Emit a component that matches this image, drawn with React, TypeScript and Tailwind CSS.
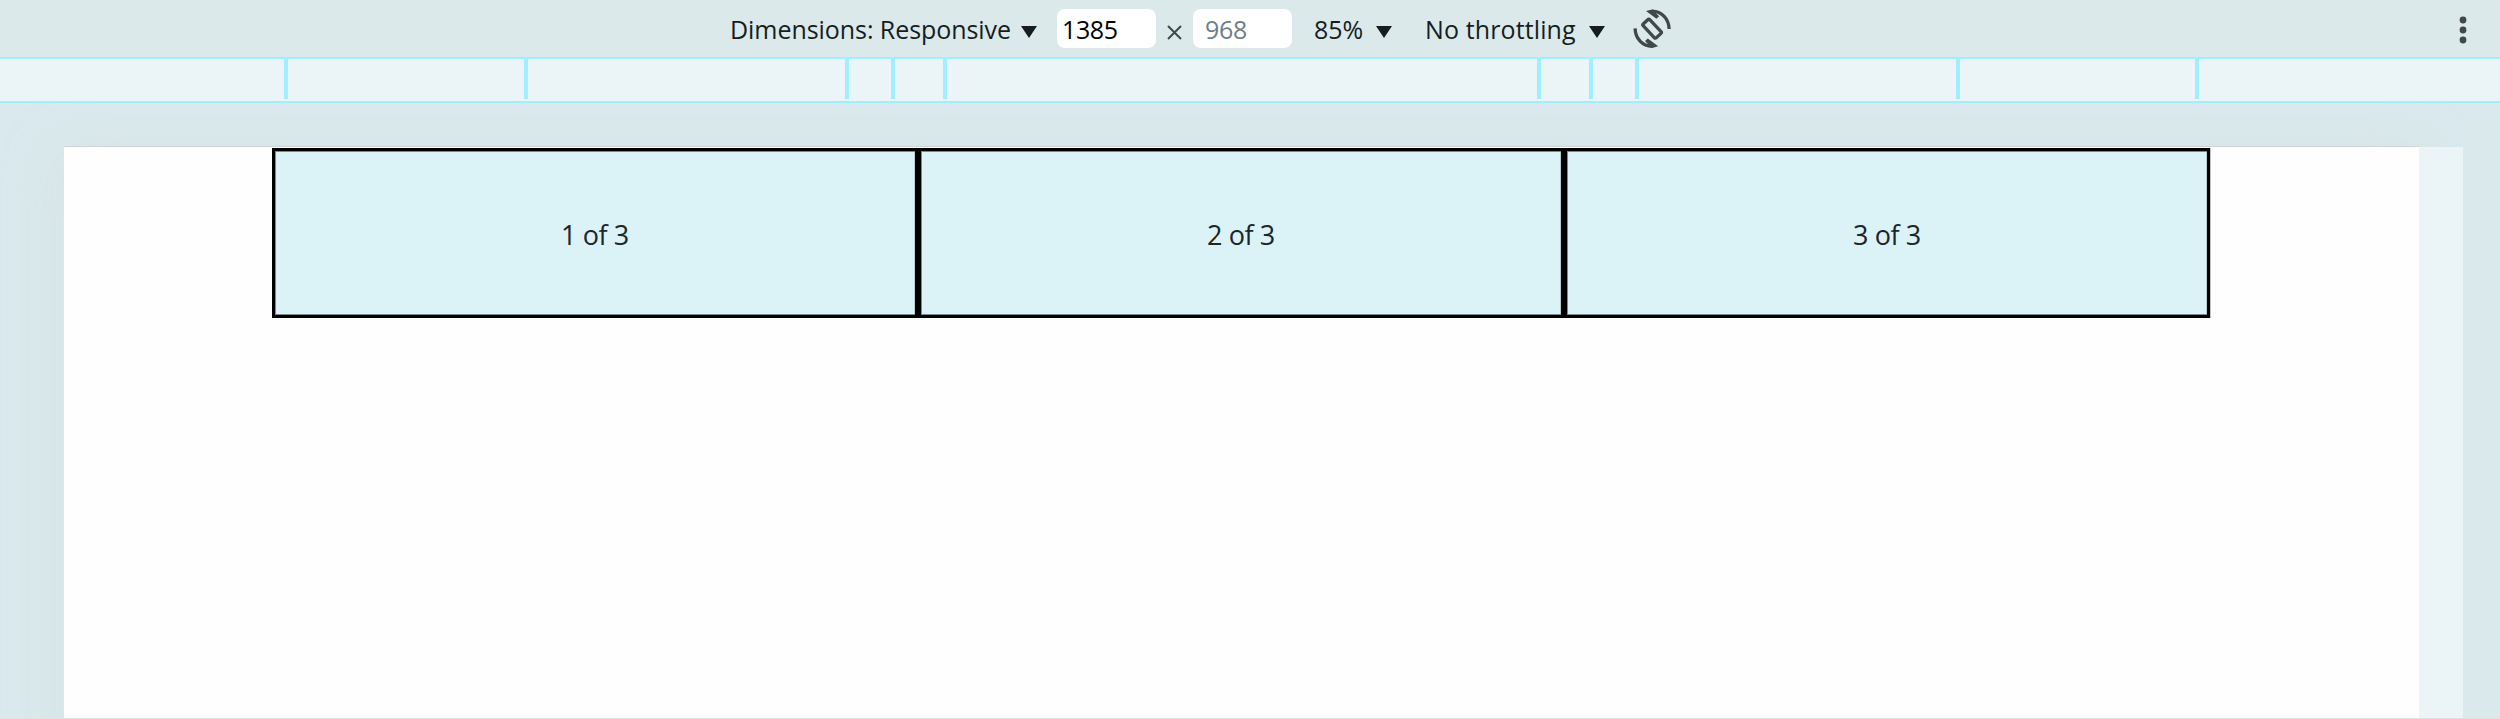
const ticks = [
  "ml-[284px]",
  "ml-[236px]",
  "ml-[317px]",
  "ml-[42px]",
  "ml-[48px]",
  "ml-[590px]",
  "ml-[48px]",
  "ml-[42px]",
  "ml-[317px]",
  "ml-[235px]",
];

function Caret({ className }: { className: string }) {
  return (
    <svg viewBox="0 0 16 12" className={`h-3 w-4 shrink-0 fill-[#171d1e] ${className}`}>
      <path d="M0 0h16L8 12z" />
    </svg>
  );
}

function RotateIcon() {
  return (
    <svg
      viewBox="0 0 40 42"
      className="mt-px ml-[27px] h-[42px] w-10 shrink-0"
      fill="none"
      stroke="#40484b"
      strokeWidth="3.3"
    >
      <rect x="-4.5" y="-9.5" width="9" height="19" rx="1.2" transform="translate(20.1 20.7) rotate(-43)" />
      <path d="M20 3.2C29.8 3.4 36.9 10.8 37.1 21" />
      <path d="M20.2 38.2C10.4 38 3.3 30.6 3.1 20.4" />
      <path d="M14 3.1 20 1.5 26.5 3.2 23.8 5 27.2 8.3 24.4 10.8z" fill="#40484b" stroke="none" />
      <path d="M26.2 38.3 20.2 39.9 13.7 38.2 16.4 36.4 13 33.1 15.8 30.6z" fill="#40484b" stroke="none" />
    </svg>
  );
}

function Toolbar() {
  return (
    <header className="flex h-[57px] shrink-0 items-center bg-[#dbe9eb] text-[25px] whitespace-nowrap text-[#171d1e]">
      <span className="ml-[730px] w-[291px] pt-[2px] tracking-[-0.06px]">Dimensions: Responsive</span>
      <Caret className="mt-[7px]" />
      <div className="ml-5 flex h-[39px] w-[99px] items-center rounded-lg bg-white pl-[5px] text-black">
        <span className="pt-[2px] tracking-[-0.4px]">1385</span>
      </div>
      <svg viewBox="0 0 15 15" className="mt-[8px] ml-[11px] size-[15px] shrink-0" stroke="#40484b" strokeWidth="2">
        <path d="M1 1l13 13M14 1L1 14" />
      </svg>
      <div className="ml-[11px] flex h-[39px] w-[99px] items-center rounded-lg bg-white pl-3 text-[#6a7f8a]">
        <span className="pt-[2px] tracking-[-0.3px]">968</span>
      </div>
      <span className="ml-[22px] w-[62px] pt-[2px]">85%</span>
      <Caret className="mt-[7px]" />
      <span className="ml-[33px] w-[164px] pt-[2px] tracking-[0.12px]">No throttling</span>
      <Caret className="mt-[7px]" />
      <RotateIcon />
      <svg viewBox="0 0 8 28" className="mt-[3px] mr-[33px] ml-auto h-7 w-2 shrink-0 fill-[#40484b]">
        <circle cx="4" cy="4" r="3.4" />
        <circle cx="4" cy="14" r="3.4" />
        <circle cx="4" cy="24" r="3.4" />
      </svg>
    </header>
  );
}

export default function App() {
  return (
    <div className="flex h-[719px] w-[2500px] flex-col overflow-hidden border-b border-[#dfe3e3] bg-[#dae9ed] font-['Open_Sans','Noto_Sans',sans-serif]">
      <Toolbar />
      <div className="flex h-[46px] shrink-0 border-y-2 border-[#9eefff] bg-[#ebf5f7]">
        {ticks.map((margin, i) => (
          <div key={i} className={`h-10 w-1 shrink-0 bg-[#9eefff] ${margin}`} />
        ))}
      </div>
      <div className="flex min-h-0 flex-1 overflow-hidden pt-[43px] pl-16">
        <main className="h-[900px] w-[2355px] shrink-0 border-t border-[#d0d5d6] bg-[#fefefe] pt-px pl-[208px] shadow-[0_10px_50px_rgba(212,220,214,0.55)]">
          <div className="grid h-[170px] w-[1938px] grid-cols-3 shadow-[1px_0_0_#bfc5c6]">
            {["1 of 3", "2 of 3", "3 of 3"].map((label) => (
              <div
                key={label}
                className="flex items-center justify-center border-3 border-black bg-[#dbf3f7] pt-1 text-[27px] tracking-[-0.4px] text-[#212529] shadow-[inset_1px_1px_0_#7b898b,inset_0_-1px_0_#7b898b,inset_-1px_0_0_#b9cdd0]"
              >
                {label}
              </div>
            ))}
          </div>
        </main>
        <div className="relative mt-px w-11 shrink-0 bg-[#ebf5f7]" />
        <div className="relative -mt-[43px] w-[37px] shrink-0 bg-[#dae9ec]" />
      </div>
    </div>
  );
}
